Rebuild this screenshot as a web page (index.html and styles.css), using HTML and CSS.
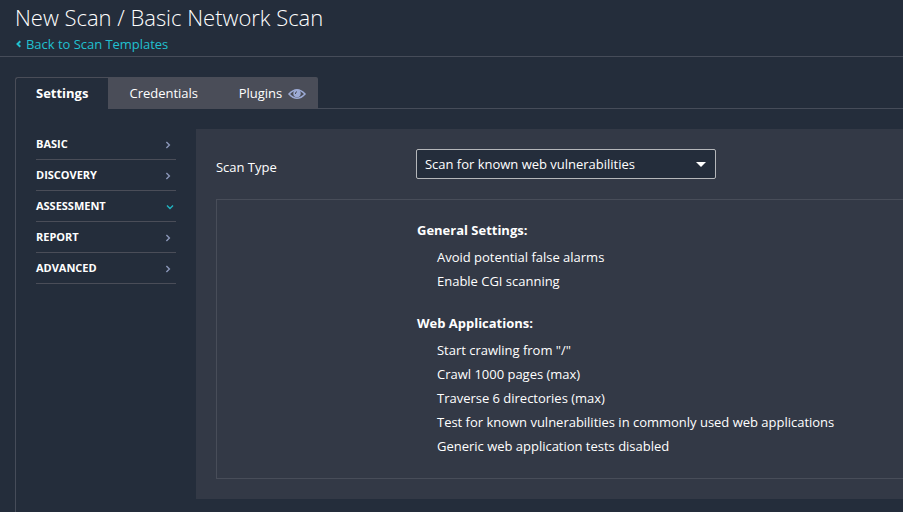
FILE: index.html
```html
<!DOCTYPE html>
<html lang="en">
<head>
<meta charset="utf-8">
<title>New Scan / Basic Network Scan</title>
<link rel="stylesheet" href="styles.css">
</head>
<body>
<header class="header">
  <h1 class="title">New Scan / Basic Network Scan</h1>
  <a class="back"><svg class="back-icon" viewBox="0 0 6 8"><path d="M5.3 1.2 2.5 4 5.3 6.8"/></svg>Back to Scan Templates</a>
</header>
<nav class="tabs">
  <a class="tab active">Settings</a>
  <div class="tab-group">
    <a class="tab credentials">Credentials</a>
    <a class="tab plugins">Plugins <svg class="eye" viewBox="0 0 18 12"><path d="M1 6Q9-2.6 17 6 9 14.6 1 6Z"/><circle class="iris" cx="9" cy="5.5" r="3.7"/><path class="glint" d="M7.4 6Q7.3 3.9 9 3.7"/></svg></a>
  </div>
  <div class="tab-rest"></div>
</nav>
<main class="content">
  <ul class="side">
    <li>BASIC<svg viewBox="0 0 8 8"><path d="M1.4 1 4.4 4 1.4 7"/></svg></li>
    <li>DISCOVERY<svg viewBox="0 0 8 8"><path d="M1.4 1 4.4 4 1.4 7"/></svg></li>
    <li class="open">ASSESSMENT<svg viewBox="0 0 8 8"><path d="M1 2.5 4 5.5 7 2.5"/></svg></li>
    <li>REPORT<svg viewBox="0 0 8 8"><path d="M1.4 1 4.4 4 1.4 7"/></svg></li>
    <li>ADVANCED<svg viewBox="0 0 8 8"><path d="M1.4 1 4.4 4 1.4 7"/></svg></li>
  </ul>
  <section class="panel">
    <div class="field">
      <label>Scan Type</label>
      <div class="select">Scan for known web vulnerabilities<span class="caret"></span></div>
    </div>
    <div class="summary">
      <h2>General Settings:</h2>
      <ul>
        <li>Avoid potential false alarms</li>
        <li>Enable CGI scanning</li>
      </ul>
      <h2>Web Applications:</h2>
      <ul>
        <li>Start crawling from "/"</li>
        <li>Crawl 1000 pages (max)</li>
        <li>Traverse 6 directories (max)</li>
        <li>Test for known vulnerabilities in commonly used web applications</li>
        <li>Generic web application tests disabled</li>
      </ul>
    </div>
  </section>
</main>
</body>
</html>
```
FILE: styles.css
```css
* { box-sizing: border-box; }
body {
  margin: 0;
  height: 512px;
  overflow: hidden;
  display: flex;
  flex-direction: column;
  background: #242d3b;
  color: #fff;
  font: 13px/24px "Open Sans", sans-serif;
  letter-spacing: -0.012px;
}
ul { list-style: none; margin: 0; padding: 0; }
svg { fill: none; stroke: currentColor; }
.header {
  height: 57px;
  flex: none;
  padding: 2px 15px 0;
  border-bottom: 1px solid #464c59;
}
.title { margin: 0 0 1px; font-size: 22px; font-weight: 300; line-height: 30px; }
.back { display: flex; align-items: center; line-height: 22px; color: #21c0d0; letter-spacing: -0.03px; }
.back-icon { width: 6px; height: 8px; margin-right: 5px; stroke-width: 2; }
.tabs { display: flex; flex: none; height: 32px; margin: 20px 0 0 15px; }
.tab { display: flex; align-items: center; }
.tab.active {
  width: 93px;
  padding: 0 0 1px 20px;
  border: solid #4a4d58;
  border-width: 1px 0 0 1px;
  border-radius: 3px 0 0 0;
  font-weight: 700;
}
.tab-group {
  display: flex;
  width: 210px;
  background: #4a4d58;
  border-radius: 0 2px 0 0;
}
.credentials { width: 110px; padding-left: 21.5px; }
.plugins { padding-left: 20.7px; }
.eye { width: 18px; height: 12px; margin: 1px 0 0 5.5px; color: #9caad5; stroke-width: 1.6; }
.eye .iris { fill: #9caad5; stroke: none; }
.eye .glint { stroke: #4a4d58; stroke-width: 1; }
.tab-rest { flex: 1; border-bottom: 1px solid #464c59; }
.content {
  display: flex;
  flex: 1;
  margin-left: 15px;
  padding: 20px 0 13px 20px;
  border-left: 1px solid #464c59;
}
.side { width: 140px; margin-right: 20px; flex: none; }
.side li {
  display: flex;
  justify-content: space-between;
  align-items: center;
  height: 31px;
  border-bottom: 1px solid #4a4d58;
  font-size: 11px;
  font-weight: 700;
}
.side svg { width: 8px; height: 8px; margin: 2px 3px 0 0; color: #8b96b8; stroke-width: 1.4; }
.side .open svg { color: #20b5c3; margin-right: 2px; }
.panel { flex: 1; padding: 20px 0 20px 20px; background: #333946; }
.field { display: flex; height: 50px; }
.field label { width: 200px; line-height: 36px; }
.select {
  display: flex;
  align-items: center;
  justify-content: space-between;
  width: 300px;
  height: 30px;
  padding: 0 9px 0 8px;
  border: 1px solid #b5b7ba;
  border-radius: 2px;
  background: #242d3b;
}
.caret { border: solid transparent; border-width: 5px 5px 0; border-top-color: #fff; }
.summary {
  height: 280px;
  padding: 18px 0 0 200px;
  border: 1px solid #484d59;
  border-right: 0;
}
.summary h2 { margin: 0 0 3px; font-size: 13px; line-height: 24px; }
.summary ul { margin-bottom: 18px; padding-left: 20px; }
```
